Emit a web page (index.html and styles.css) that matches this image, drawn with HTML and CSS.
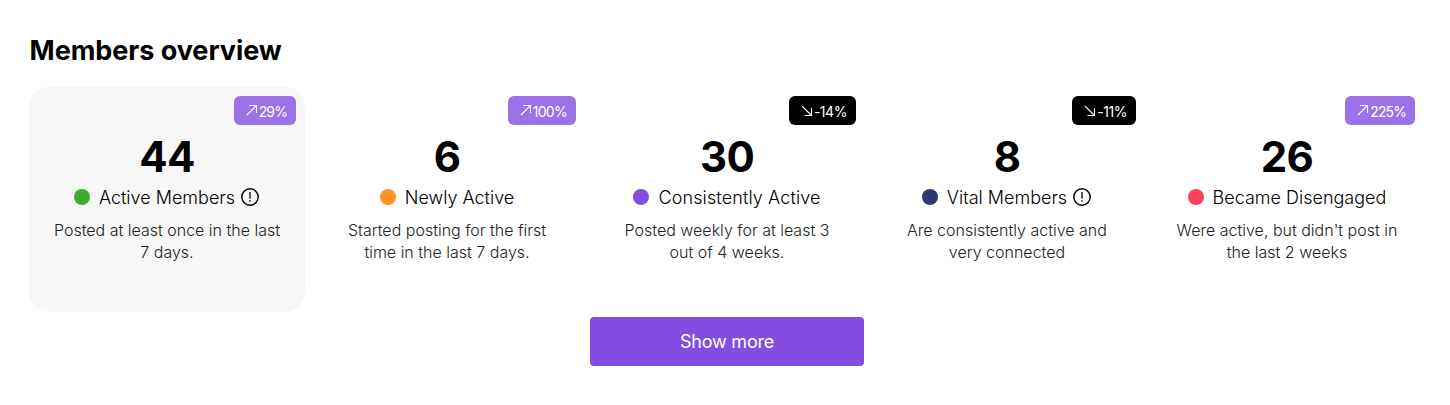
FILE: index.html
```html
<!DOCTYPE html>
<html lang="en">
<head>
<meta charset="utf-8">
<title>Members overview</title>
<link rel="stylesheet" href="styles.css">
</head>
<body>
<main class="overview">
<h1 class="title">Members overview</h1>
<section class="cards">
<article class="card selected">
<div class="badge up"><svg class="arrow" viewBox="0 0 14 14"><path d="M2 12L11.5 2.5M4 2.5H11.5V10"/></svg>29%</div>
<div class="count">44</div>
<div class="label"><i class="dot green"></i><span>Active Members</span><svg class="info" viewBox="0 0 20 20"><circle cx="10" cy="10" r="8.2"/><path class="mark" d="M10 5V11.7M10 13.3V14.8"/></svg></div>
<p class="desc">Posted at least once in the last<br>7 days.</p>
</article>
<article class="card">
<div class="badge up three"><svg class="arrow" viewBox="0 0 14 14"><path d="M2 12L11.5 2.5M4 2.5H11.5V10"/></svg>100%</div>
<div class="count">6</div>
<div class="label"><i class="dot orange"></i><span>Newly Active</span></div>
<p class="desc">Started posting for the first<br>time in the last 7 days.</p>
</article>
<article class="card">
<div class="badge down"><svg class="arrow" viewBox="0 0 14 14"><path d="M2 3L11.5 12.5M4.5 12.5H11.5V5"/></svg>-14%</div>
<div class="count">30</div>
<div class="label wide"><i class="dot purple"></i><span>Consistently Active</span></div>
<p class="desc">Posted weekly for at least 3<br>out of 4 weeks.</p>
</article>
<article class="card">
<div class="badge down"><svg class="arrow" viewBox="0 0 14 14"><path d="M2 3L11.5 12.5M4.5 12.5H11.5V5"/></svg>-11%</div>
<div class="count">8</div>
<div class="label"><i class="dot navy"></i><span>Vital Members</span><svg class="info" viewBox="0 0 20 20"><circle cx="10" cy="10" r="8.2"/><path class="mark" d="M10 5V11.7M10 13.3V14.8"/></svg></div>
<p class="desc">Are consistently active and<br>very connected</p>
</article>
<article class="card">
<div class="badge up"><svg class="arrow" viewBox="0 0 14 14"><path d="M2 12L11.5 2.5M4 2.5H11.5V10"/></svg>225%</div>
<div class="count">26</div>
<div class="label"><i class="dot red"></i><span>Became Disengaged</span></div>
<p class="desc">Were active, but didn't post in<br>the last 2 weeks</p>
</article>
</section>
<button class="more">Show more</button>
</main>
</body>
</html>
```
FILE: styles.css
```css
* { box-sizing: border-box; }
body { margin: 0; background: #fff; color: #000; font-family: Inter, sans-serif; }
.overview { padding: 34px 21px 0 29px; display: flex; flex-direction: column; }
.title { margin: 0 0 20px; padding-left: 0.6px; font-size: 27px; line-height: 33px; font-weight: 700; letter-spacing: -0.05px; }
.cards { display: grid; grid-template-columns: repeat(5, 276px); column-gap: 4px; }
.card { height: 225px; padding: 9px 9px 0; border-radius: 20px; display: flex; flex-direction: column; align-items: center; }
.card:last-child { padding-right: 10px; padding-left: 10px; }
.selected { background: #f7f7f7; }
.badge { align-self: flex-end; height: 29px; padding: 2px 9px 0 11px; border-radius: 6px; color: #fff; font-size: 14px; display: flex; align-items: center; }
.up { background: #9b72e8; letter-spacing: -0.9px; }
.three { letter-spacing: -0.7px; }
.down { background: #000; letter-spacing: -0.45px; }
.arrow { width: 14px; height: 14px; margin-bottom: 4px; fill: none; stroke: currentColor; stroke-width: 1.1; }
.count { margin-top: 7px; font-size: 42px; line-height: 50px; font-weight: 700; letter-spacing: -0.7px; }
.label { margin-top: 2px; height: 26px; font-size: 18px; font-weight: 300; display: flex; align-items: center; }
.wide { letter-spacing: 0.12px; }
.dot { width: 16px; height: 16px; margin-right: 9px; border-radius: 50%; }
.green { background: #3bad29; }
.orange { background: #ff9325; }
.purple { background: #824de0; }
.navy { background: #2f3871; }
.red { background: #ff4259; }
.info { width: 20px; height: 20px; margin-left: 5px; fill: none; stroke: #000; stroke-width: 1.5; }
.mark { stroke-width: 1.3; }
.desc { margin: 9px 0 0; color: #222; font-size: 16px; line-height: 22px; font-weight: 300; text-align: center; white-space: nowrap; }
.more { margin: 5px 0 0 561px; width: 274px; height: 49px; border: 0; border-radius: 4px; background: #824de0; color: #fff; font: 400 18px Inter, sans-serif; letter-spacing: -0.2px; }
```
